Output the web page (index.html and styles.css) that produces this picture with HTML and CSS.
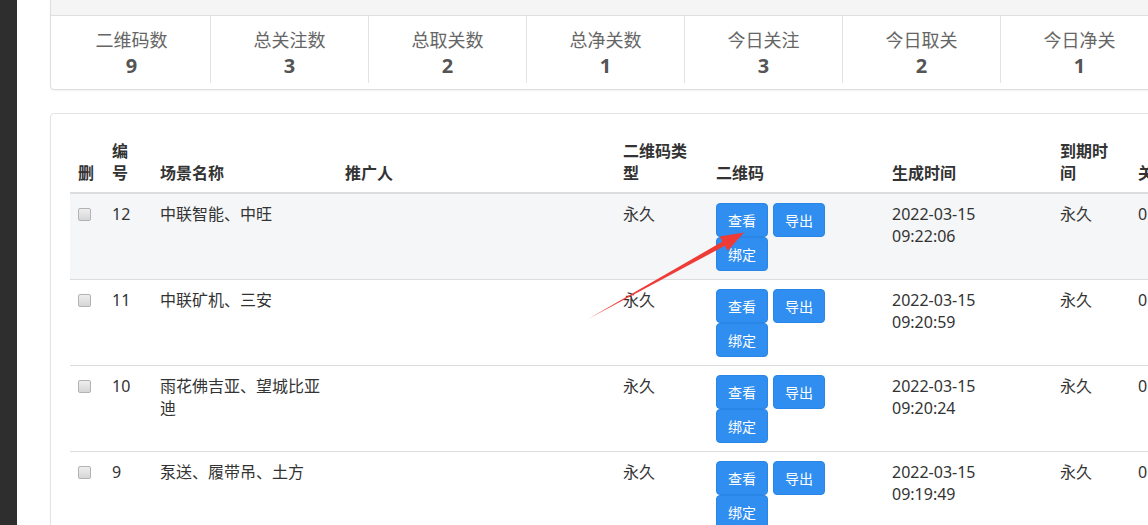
FILE: index.html
```html
<!DOCTYPE html>
<html lang="zh-CN">
<head>
<meta charset="utf-8">
<title>二维码统计</title>
<link rel="stylesheet" href="styles.css">
</head>
<body>
<div class="app">
  <aside class="sidebar"></aside>
  <main class="main">
    <section class="card stats-card">
      <header class="card-head">统计 数据</header>
      <div class="stats">
        <div class="stat"><div class="stat-label">二维码数</div><div class="stat-value">9</div></div>
        <div class="stat"><div class="stat-label">总关注数</div><div class="stat-value">3</div></div>
        <div class="stat"><div class="stat-label">总取关数</div><div class="stat-value">2</div></div>
        <div class="stat"><div class="stat-label">总净关数</div><div class="stat-value">1</div></div>
        <div class="stat"><div class="stat-label">今日关注</div><div class="stat-value">3</div></div>
        <div class="stat"><div class="stat-label">今日取关</div><div class="stat-value">2</div></div>
        <div class="stat"><div class="stat-label">今日净关</div><div class="stat-value">1</div></div>
      </div>
    </section>

    <section class="card table-card">
      <table class="qr-table">
        <thead>
          <tr>
            <th class="c-del">删</th>
            <th class="c-id">编号</th>
            <th class="c-name">场景名称</th>
            <th class="c-promo">推广人</th>
            <th class="c-type">二维码类型</th>
            <th class="c-qr">二维码</th>
            <th class="c-time">生成时间</th>
            <th class="c-exp">到期时间</th>
            <th class="c-num">关注数</th>
          </tr>
        </thead>
        <tbody>
          <tr class="is-hover">
            <td><input type="checkbox" class="chk"></td>
            <td>12</td>
            <td>中联智能、中旺</td>
            <td></td>
            <td>永久</td>
            <td><div class="btns"><button class="btn">查看</button><button class="btn">导出</button><button class="btn">绑定</button></div></td>
            <td>2022-03-15<br>09:22:06</td>
            <td>永久</td>
            <td>0</td>
          </tr>
          <tr>
            <td><input type="checkbox" class="chk"></td>
            <td>11</td>
            <td>中联矿机、三安</td>
            <td></td>
            <td>永久</td>
            <td><div class="btns"><button class="btn">查看</button><button class="btn">导出</button><button class="btn">绑定</button></div></td>
            <td>2022-03-15<br>09:20:59</td>
            <td>永久</td>
            <td>0</td>
          </tr>
          <tr>
            <td><input type="checkbox" class="chk"></td>
            <td>10</td>
            <td>雨花佛吉亚、望城比亚迪</td>
            <td></td>
            <td>永久</td>
            <td><div class="btns"><button class="btn">查看</button><button class="btn">导出</button><button class="btn">绑定</button></div></td>
            <td>2022-03-15<br>09:20:24</td>
            <td>永久</td>
            <td>0</td>
          </tr>
          <tr>
            <td><input type="checkbox" class="chk"></td>
            <td>9</td>
            <td>泵送、履带吊、土方</td>
            <td></td>
            <td>永久</td>
            <td><div class="btns"><button class="btn">查看</button><button class="btn">导出</button><button class="btn">绑定</button></div></td>
            <td>2022-03-15<br>09:19:49</td>
            <td>永久</td>
            <td>0</td>
          </tr>
        </tbody>
      </table>
    </section>
  </main>

  <svg class="annotation" width="1148" height="525" viewBox="0 0 1148 525" aria-hidden="true">
    <polygon fill="#ee3b36" points="588,319 722.5,241.6 719.6,236.4 744,232.5 727.8,250.8 724.9,245.8"/>
  </svg>
</div>
</body>
</html>
```

FILE: styles.css
```css
* { box-sizing: border-box; }

html, body {
  margin: 0;
  padding: 0;
  height: 100%;
  overflow: hidden;
  background: #fff;
}

body {
  font-family: "Noto Sans", "Noto Sans CJK SC", sans-serif;
  color: #333;
  font-size: 16px;
}

.app {
  position: relative;
  display: flex;
  height: 525px;
  overflow: hidden;
}

.sidebar {
  flex: 0 0 17px;
  background: #2e2e2e;
}

.main {
  flex: 1;
  min-width: 0;
  padding-left: 33px;
  margin-top: -26px;
  display: flex;
  flex-direction: column;
  align-items: flex-start;
  overflow: hidden;
}

.card {
  width: max-content;
  background: #fff;
  border: 1px solid #dedede;
  border-radius: 4px;
  box-shadow: 0 1px 2px rgba(0, 0, 0, 0.05);
}

.card-head {
  height: 41px;
  padding: 7px 32px 13px;
  line-height: 20px;
  font-size: 16px;
  color: #666;
  background: #f5f5f5;
  border-bottom: 1px solid #dedede;
  border-radius: 4px 4px 0 0;
}

.stats {
  display: flex;
  padding: 0 0 6px 2px;
}

.stat {
  width: 158px;
  padding-top: 11px;
  height: 67px;
  border-right: 1px solid #e3e3e3;
  text-align: center;
}

.stat-label {
  font-size: 18px;
  line-height: 26px;
  color: #666;
}

.stat-value {
  font-size: 20px;
  line-height: 26px;
  font-weight: 700;
  color: #555;
}

.table-card {
  margin-top: 23px;
  padding: 19px;
  border-color: #e3e3e3;
}

.qr-table {
  table-layout: fixed;
  width: 1160px;
  border-collapse: collapse;
  border-spacing: 0;
}

.qr-table th,
.qr-table td {
  padding: 8px;
  line-height: 21.6px;
  text-align: left;
  vertical-align: top;
  font-size: 16px;
}

.qr-table th {
  vertical-align: bottom;
  font-weight: 700;
  color: #333;
  border-bottom: 2px solid #dddddd;
}

.qr-table th.c-id { padding-right: 10px; }

.qr-table td {
  padding-top: 10px;
  color: #333;
  border-top: 1px solid #dddddd;
}

.qr-table tbody tr:first-child td { border-top: 0; }

.qr-table tr.is-hover td { background: #f5f6f8; }

.c-del { width: 34px; }
.c-id { width: 48px; }
.c-name { width: 185px; }
.c-promo { width: 278px; }
.c-type { width: 93px; }
.c-qr { width: 176px; }
.c-time { width: 168px; }
.c-exp { width: 78px; }
.c-num { width: 100px; }

.chk {
  appearance: none;
  -webkit-appearance: none;
  display: block;
  width: 13px;
  height: 13px;
  margin: 4px 0 0 0;
  border: 1px solid #b3b3b3;
  border-radius: 2px;
  background: linear-gradient(#eeeeee, #d6d6d6);
}

.btns {
  display: flex;
  flex-wrap: wrap;
  column-gap: 5px;
  row-gap: 0;
  margin-top: -1px;
}

.btn {
  height: 34px;
  padding: 6px 11px;
  font-family: "Noto Sans CJK SC", sans-serif;
  font-size: 14px;
  line-height: 20px;
  color: #fff;
  background: #2f8ef0;
  border: 1px solid #2a86e6;
  border-radius: 4px;
}

.annotation {
  position: absolute;
  top: 0;
  left: 0;
  pointer-events: none;
}
```
